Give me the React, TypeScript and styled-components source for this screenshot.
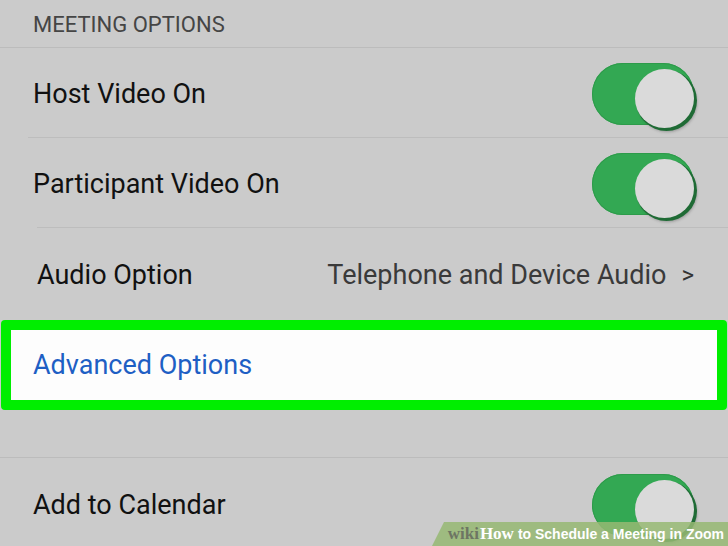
import styled, { createGlobalStyle } from 'styled-components';

const Global = createGlobalStyle`
  html, body {
    margin: 0;
    padding: 0;
    background: #cbcbcb;
  }
  * {
    box-sizing: border-box;
  }
`;

const Screen = styled.div`
  position: relative;
  width: 728px;
  height: 546px;
  overflow: hidden;
  background: #cbcbcb;
  font-family: Roboto, 'Noto Sans', sans-serif;
`;

const SectionHeader = styled.div`
  height: 48px;
  display: flex;
  align-items: center;
  padding: 2px 0 0 33px;
  color: #454545;
  font-size: 22px;
  border-bottom: 1px solid #bcbcbc;
`;

const Row = styled.div<{ $height: number; $lineFrom?: number }>`
  position: relative;
  height: ${(p) => p.$height}px;
  display: flex;
  align-items: center;
  justify-content: space-between;
  padding: 2px 34px 0 33px;

  &::after {
    content: '';
    display: ${(p) => (p.$lineFrom === undefined ? 'none' : 'block')};
    position: absolute;
    left: ${(p) => p.$lineFrom ?? 0}px;
    right: 0;
    bottom: 0;
    height: 1px;
    background: #bdbdbd;
  }
`;

const Label = styled.span<{ $indent?: number }>`
  font-size: 27px;
  color: #111;
  margin-left: ${(p) => p.$indent ?? 0}px;
`;

const Value = styled.span`
  display: flex;
  align-items: center;
  gap: 15px;
  font-size: 27px;
  color: #3a3a3a;
`;

const Chevron = styled.span`
  font-size: 24px;
  color: #333;
`;

const Track = styled.div`
  position: relative;
  width: 102px;
  height: 62px;
  border-radius: 31px;
  background: #33a853;
  box-shadow: inset 0 0 0 1px #2d9b4a;
`;

const Knob = styled.div`
  position: absolute;
  right: 0;
  top: 6px;
  width: 59px;
  height: 59px;
  border-radius: 50%;
  background: #dadada;
  box-shadow: 2px 2px 0 1px #1f6b35, 3px 4px 3px rgba(0, 0, 0, 0.25);
`;

const Highlight = styled.div`
  height: 90px;
  display: flex;
  align-items: center;
  padding-left: 22px;
  margin: 0 1px;
  background: #fdfdfd;
  border: 10px solid #00ee00;
  border-radius: 4px;
`;

const LinkText = styled.span`
  font-size: 27px;
  color: #1e5fc4;
`;

const Gap = styled.div`
  height: 48px;
  border-bottom: 1px solid #bcbcbc;
`;

const Watermark = styled.div`
  position: absolute;
  right: 0;
  bottom: 0;
  width: 296px;
  height: 24px;
  background: rgba(150, 185, 115, 0.85);
  clip-path: polygon(12px 0, 100% 0, 100% 100%, 0 100%);
  display: flex;
  align-items: center;
  justify-content: flex-end;
  padding-right: 4px;
  font-family: 'Liberation Sans', Arial, sans-serif;
  font-size: 14px;
  font-weight: bold;
  color: #fff;
  white-space: nowrap;
`;

const Wiki = styled.span`
  font-family: 'Liberation Serif', 'Times New Roman', serif;
  font-size: 17px;
  color: #6d7563;
  margin-right: 1px;
`;

const How = styled.span`
  font-family: 'Liberation Serif', 'Times New Roman', serif;
  font-size: 17px;
  margin-right: 4px;
`;

const Toggle = () => (
  <Track>
    <Knob />
  </Track>
);

export default function App() {
  return (
    <Screen>
      <Global />
      <SectionHeader>MEETING OPTIONS</SectionHeader>
      <Row $height={90} $lineFrom={28}>
        <Label>Host Video On</Label>
        <Toggle />
      </Row>
      <Row $height={90} $lineFrom={37}>
        <Label>Participant Video On</Label>
        <Toggle />
      </Row>
      <Row $height={92}>
        <Label $indent={4}>Audio Option</Label>
        <Value>
          Telephone and Device Audio
          <Chevron>&gt;</Chevron>
        </Value>
      </Row>
      <Highlight>
        <LinkText>Advanced Options</LinkText>
      </Highlight>
      <Gap />
      <Row $height={92}>
        <Label>Add to Calendar</Label>
        <Toggle />
      </Row>
      <Watermark>
        <Wiki>wiki</Wiki>
        <How>How</How>
        to Schedule a Meeting in Zoom
      </Watermark>
    </Screen>
  );
}
